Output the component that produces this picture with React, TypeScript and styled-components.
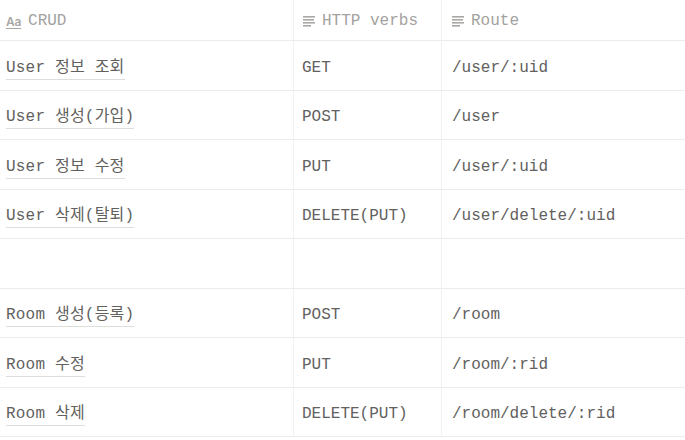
import styled, { createGlobalStyle } from "styled-components";

const GlobalStyle = createGlobalStyle`
  html, body {
    margin: 0;
    padding: 0;
    background: #ffffff;
  }
  body {
    font-family: "Liberation Mono", "Noto Sans CJK KR", monospace;
    overflow: hidden;
  }
`;

const StyledTable = styled.div`
  display: grid;
  grid-template-columns: 294px 148px 243px;
  width: 685px;
`;

const StyledHeadCell = styled.div<{ $pl: number; $last?: boolean }>`
  display: flex;
  align-items: center;
  gap: 7px;
  height: 41px;
  box-sizing: border-box;
  padding-left: ${(p) => p.$pl}px;
  padding-top: 2px;
  border-bottom: 1px solid #ebebea;
  border-right: ${(p) => (p.$last ? "none" : "1px solid #f1f1ef")};
  color: #a3a29f;
  font-size: 16px;
`;

const StyledCell = styled.div<{ $pl: number; $last?: boolean }>`
  display: flex;
  align-items: center;
  height: 49.5px;
  box-sizing: border-box;
  padding-left: ${(p) => p.$pl}px;
  padding-top: 5px;
  border-bottom: 1px solid #ebebea;
  border-right: ${(p) => (p.$last ? "none" : "1px solid #f1f1ef")};
  color: #62615e;
  font-size: 16px;
  white-space: nowrap;
`;

const StyledTitle = styled.span`
  margin-top: 3px;
  border-bottom: 1px solid #dddddb;
  padding-bottom: 1px;
  line-height: 19px;
  letter-spacing: 0.2px;
`;

const StyledAa = styled.span`
  font-family: "Inter", "Liberation Sans", sans-serif;
  font-size: 12px;
  font-weight: 600;
  color: #a9a8a5;
  text-decoration: underline;
  text-underline-offset: 2px;
  letter-spacing: -0.3px;
`;

const LinesIcon = () => (
  <svg width="12" height="12" viewBox="0 0 12 12" fill="#a9a8a5">
    <rect x="0" y="1" width="12" height="1.6" />
    <rect x="0" y="4" width="11" height="1.6" />
    <rect x="0" y="7" width="12" height="1.6" />
    <rect x="0" y="10" width="8" height="1.6" />
  </svg>
);

type Row = { name: string; verb: string; route: string };

const rows: Row[] = [
  { name: "User 정보 조회", verb: "GET", route: "/user/:uid" },
  { name: "User 생성(가입)", verb: "POST", route: "/user" },
  { name: "User 정보 수정", verb: "PUT", route: "/user/:uid" },
  { name: "User 삭제(탈퇴)", verb: "DELETE(PUT)", route: "/user/delete/:uid" },
  { name: "", verb: "", route: "" },
  { name: "Room 생성(등록)", verb: "POST", route: "/room" },
  { name: "Room 수정", verb: "PUT", route: "/room/:rid" },
  { name: "Room 삭제", verb: "DELETE(PUT)", route: "/room/delete/:rid" },
];

export default function App() {
  return (
    <>
      <GlobalStyle />
      <StyledTable>
        <StyledHeadCell $pl={6}>
          <StyledAa>Aa</StyledAa>
          <span>CRUD</span>
        </StyledHeadCell>
        <StyledHeadCell $pl={9}>
          <LinesIcon />
          <span>HTTP verbs</span>
        </StyledHeadCell>
        <StyledHeadCell $pl={10} $last>
          <LinesIcon />
          <span>Route</span>
        </StyledHeadCell>

        {rows.map((r, i) => (
          <>
            <StyledCell key={`n${i}`} $pl={6}>
              {r.name && <StyledTitle>{r.name}</StyledTitle>}
            </StyledCell>
            <StyledCell key={`v${i}`} $pl={8}>
              {r.verb}
            </StyledCell>
            <StyledCell key={`r${i}`} $pl={10} $last>
              {r.route}
            </StyledCell>
          </>
        ))}
      </StyledTable>
    </>
  );
}
